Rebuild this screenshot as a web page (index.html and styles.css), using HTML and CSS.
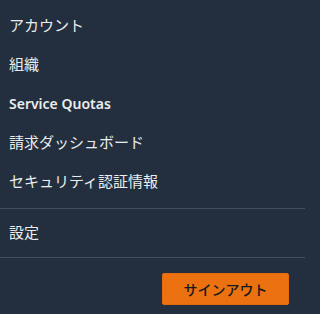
FILE: index.html
```html
<!DOCTYPE html>
<html lang="ja">
<head>
<meta charset="utf-8">
<link rel="stylesheet" href="styles.css">
</head>
<body>
<div class="menu">
  <ul class="group group-main">
    <li class="item">アカウント</li>
    <li class="item">組織</li>
    <li class="item item-bold">Service Quotas</li>
    <li class="item">請求ダッシュボード</li>
    <li class="item">セキュリティ認証情報</li>
  </ul>
  <div class="divider"></div>
  <ul class="group group-settings">
    <li class="item">設定</li>
  </ul>
  <div class="divider"></div>
  <div class="actions">
    <button class="signout">サインアウト</button>
  </div>
</div>
</body>
</html>
```
FILE: styles.css
```css
html, body {
  margin: 0;
  padding: 0;
  background: #232f3e;
}
body {
  width: 305px;
  height: 314px;
  font-family: "Noto Sans", "Noto Sans CJK JP", sans-serif;
  color: #eaeded;
}
.menu {
  display: flex;
  flex-direction: column;
}
.group {
  list-style: none;
  margin: 0;
  padding: 0;
}
.group-main {
  padding: 6px 0 7px;
}
.group-settings {
  padding: 4px 0 5px;
}
.item {
  height: 39px;
  line-height: 39px;
  padding-left: 9px;
  font-size: 15px;
  white-space: nowrap;
}
.item-bold {
  font-weight: 600;
  font-size: 14px;
}
.divider {
  height: 1px;
  background: #414d5c;
}
.actions {
  display: flex;
  justify-content: flex-end;
  padding: 15px 16px 0 0;
}
.signout {
  width: 127px;
  height: 32px;
  background: #ec7211;
  border: 1px solid #e36b0c;
  border-radius: 2px;
  color: #16191f;
  font-family: "Noto Sans", "Noto Sans CJK JP", sans-serif;
  font-size: 14px;
  font-weight: 500;
  padding: 0;
}
```
